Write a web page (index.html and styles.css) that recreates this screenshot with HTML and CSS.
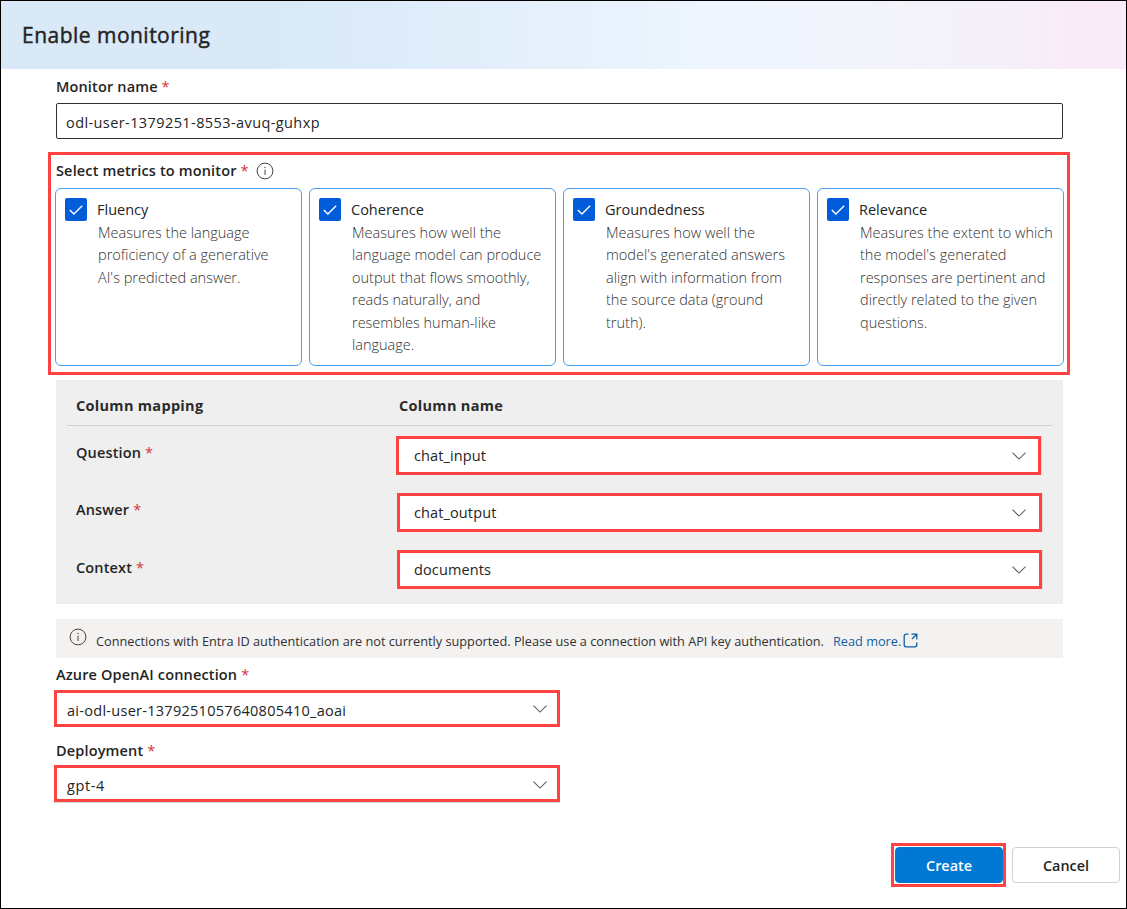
FILE: index.html
```html
<!DOCTYPE html>
<html lang="en">
<head>
<meta charset="utf-8">
<title>Enable monitoring</title>
<link rel="stylesheet" href="styles.css">
</head>
<body>
<svg class="sprite" aria-hidden="true">
  <symbol id="info" viewBox="0 0 18 18"><circle cx="9" cy="9" r="7.9" fill="none" stroke="currentColor" stroke-width="1"/><path d="M9 7.7V13" fill="none" stroke="currentColor" stroke-width="1"/><circle cx="9" cy="5.5" r=".7" fill="currentColor"/></symbol>
  <symbol id="chevron" viewBox="0 0 14 8"><path d="M.5.7 7 7.1 13.5.7" fill="none" stroke="currentColor" stroke-width="1.1"/></symbol>
  <symbol id="check" viewBox="0 0 14 10"><path d="M.8 5 4.9 9 13.2.8" fill="none" stroke="currentColor" stroke-width="1.4"/></symbol>
  <symbol id="open" viewBox="0 0 15 15"><path d="M5.500 1.200H3.200a2 2 0 0 0-2 2v8.600a2 2 0 0 0 2 2h8.600a2 2 0 0 0 2-2V9.500M8.500 1.200h5.300v5.300M13.500 1.500 9 6" fill="none" stroke="currentColor" stroke-width="1.300"/></symbol>
</svg>
<div class="dialog">
  <header class="header"><h1 class="title">Enable monitoring</h1></header>
  <main class="form">
    <label class="label">Monitor name <i class="req">*</i></label>
    <div class="input">odl-user-1379251-8553-avuq-guhxp</div>

    <section class="metrics">
      <div class="label metrics-label">Select metrics to monitor <i class="req">*</i> <svg class="info"><use href="#info"/></svg></div>
      <div class="cards">
        <article class="card">
          <div class="card-head"><span class="box"><svg><use href="#check"/></svg></span><span class="name">Fluency</span></div>
          <p class="desc">Measures the language<br>proficiency of a generative<br>AI's predicted answer.</p>
        </article>
        <article class="card">
          <div class="card-head"><span class="box"><svg><use href="#check"/></svg></span><span class="name">Coherence</span></div>
          <p class="desc">Measures how well the<br>language model can produce<br>output that flows smoothly,<br>reads naturally, and<br>resembles human-like<br>language.</p>
        </article>
        <article class="card">
          <div class="card-head"><span class="box"><svg><use href="#check"/></svg></span><span class="name">Groundedness</span></div>
          <p class="desc">Measures how well the<br>model's generated answers<br>align with information from<br>the source data (ground<br>truth).</p>
        </article>
        <article class="card">
          <div class="card-head"><span class="box"><svg><use href="#check"/></svg></span><span class="name">Relevance</span></div>
          <p class="desc">Measures the extent to which<br>the model's generated<br>responses are pertinent and<br>directly related to the given<br>questions.</p>
        </article>
      </div>
    </section>

    <section class="mapping">
      <div class="map-head"><span>Column mapping</span><span>Column name</span></div>
      <div class="map-row first"><div class="map-label">Question <i class="req">*</i></div><div class="select"><span>chat_input</span><svg class="chevron"><use href="#chevron"/></svg></div></div>
      <div class="map-row"><div class="map-label">Answer <i class="req">*</i></div><div class="select"><span>chat_output</span><svg class="chevron"><use href="#chevron"/></svg></div></div>
      <div class="map-row last"><div class="map-label">Context <i class="req">*</i></div><div class="select"><span>documents</span><svg class="chevron"><use href="#chevron"/></svg></div></div>
    </section>

    <div class="banner"><svg class="info"><use href="#info"/></svg><span class="message">Connections with Entra ID authentication are not currently supported. Please use a connection with API key authentication.</span><a class="link">Read more.<svg class="open"><use href="#open"/></svg></a></div>

    <div class="label connection">Azure OpenAI connection <i class="req">*</i></div>
    <div class="select wide"><span>ai-odl-user-1379251057640805410_aoai</span><svg class="chevron"><use href="#chevron"/></svg></div>
    <div class="label deployment">Deployment <i class="req">*</i></div>
    <div class="select wide underlined"><span>gpt-4</span><svg class="chevron"><use href="#chevron"/></svg></div>
  </main>
  <footer class="footer">
    <div class="highlight"><button class="btn primary">Create</button></div>
    <button class="btn">Cancel</button>
  </footer>
</div>
</body>
</html>
```
FILE: styles.css
```css
* { box-sizing: border-box; }

body {
  margin: 0;
  font-family: "Open Sans", "Noto Sans", sans-serif;
  font-size: 14.5px;
  color: #242424;
}

.sprite { display: none; }

.dialog {
  display: flex;
  flex-direction: column;
  width: 1127px;
  height: 909px;
  border: 1px solid #000;
  background: #fff;
}

.header {
  height: 68px;
  padding: 18px 21px;
  background: linear-gradient(90deg, #d9e9f8 0, #d9e9f8 24%, #e3effb 45%, #eff6ff 65%, #f3f3fa 80%, #f5effa 90%, #faebf7 97%, #f8ebfa 100%);
}

.title { margin: 0; font-size: 21px; line-height: 32px; font-weight: 400; letter-spacing: .48px; -webkit-text-stroke: .45px; color: #242424; }

.form { display: flex; flex-direction: column; flex: 1; padding: 0 63px 0 55px; }

.label, .map-label { font-weight: 600; letter-spacing: .15px; white-space: nowrap; }

.label { display: block; height: 20px; line-height: 20px; margin-top: 8px; }

.req { font-style: normal; font-weight: 400; color: #d13438; }

.input {
  height: 36px;
  margin-top: 6px;
  padding: 0 9px;
  border: 1px solid #323130;
  border-radius: 2px;
  line-height: 37px;
  letter-spacing: .41px;
}

.metrics {
  height: 223px;
  margin: 13px -7px 0 -8px;
  padding: 6px 3px 0 4px;
  border: 3px solid #ff4343;
}

.metrics-label { display: flex; align-items: center; gap: 4px; margin: 0 0 0 1px; }

.info { flex: none; width: 18px; height: 18px; color: #484644; }
.metrics-label .info { margin: -1px 0 0 3px; }

.cards { display: grid; grid-template-columns: repeat(4, 247px); gap: 7px; margin-top: 7px; }

.card { height: 178px; border: 1px solid #479ef5; border-radius: 6px; padding: 9px; }

.card-head { display: flex; align-items: center; gap: 10px; height: 23px; }

.box { display: grid; place-items: center; width: 22px; height: 23px; border-radius: 2px; background: #015cda; color: #fff; }
.box svg { width: 14px; height: 10px; }

.desc { margin: 0 0 0 33px; padding-top: 1px; font-weight: 300; line-height: 22.4px; white-space: nowrap; color: #323130; }

.mapping { height: 224px; margin-top: 5px; padding: 0 11px; background: #efefef; }

.map-head {
  display: grid;
  grid-template-columns: 323px 1fr;
  height: 46px;
  padding: 3px 9px 0;
  border-bottom: 1px solid #d1d1d1;
  line-height: 45px;
  font-weight: 700;
  letter-spacing: .3px;
  color: #2b2b2b;
}

.map-row { display: grid; grid-template-columns: 321px 645px; height: 57px; padding: 10px 0 0 9px; }
.map-row .select { box-shadow: 1px 0 0 #dcdcdc; letter-spacing: .12px; }
.map-row .chevron { margin-right: 2px; }
.map-row.first { grid-template-columns: 320px 645px; }
.first .select { padding-left: 15px; }
.first .chevron { margin-right: 1px; }

.map-label { line-height: 34px; }
.last .map-label { line-height: 36px; }

.select {
  display: flex;
  align-items: center;
  justify-content: space-between;
  height: 39px;
  padding: 0 11px 0 14px;
  border: 3px solid #ff4343;
  background: #fff;
}

.chevron { width: 14px; height: 8px; color: #616161; }

.banner { display: flex; align-items: center; height: 39px; margin-top: 15px; padding: 0 13px; background: #f3f2f1; font-size: 12.74px; color: #323130; white-space: nowrap; }
.banner .info { margin: -4px 9px 0 0; }
.message { margin-top: 4px; }

.link { display: flex; align-items: center; gap: 2px; margin: 4px 0 0 9px; color: #115ea3; }
.open { width: 15px; height: 15px; margin-top: -1px; }

.connection { margin-top: 7px; }
.deployment { margin-top: 14px; }

.wide { width: 506px; height: 37px; margin: 5px 0 0 -2px; padding: 4px 10px 0; letter-spacing: .28px; }
.wide .chevron { margin-top: -4px; }
.underlined { margin-top: 4px; box-shadow: 0 1px 0 #dcdcdc; letter-spacing: .6px; }
.underlined .chevron { margin-top: -2px; }

.footer { display: flex; justify-content: flex-end; align-items: center; gap: 6px; height: 44px; margin: 0 6px 21px; }

.highlight { width: 115px; height: 44px; padding: 1px; border: 3px solid #ff4343; }

.btn { width: 108px; height: 36px; border: 1px solid #d1d1d1; border-radius: 4px; background: #fff; font: 600 14.4px "Open Sans", sans-serif; color: #242424; }

.primary { border-color: #0078d4; background: #0078d4; color: #fff; }
```
